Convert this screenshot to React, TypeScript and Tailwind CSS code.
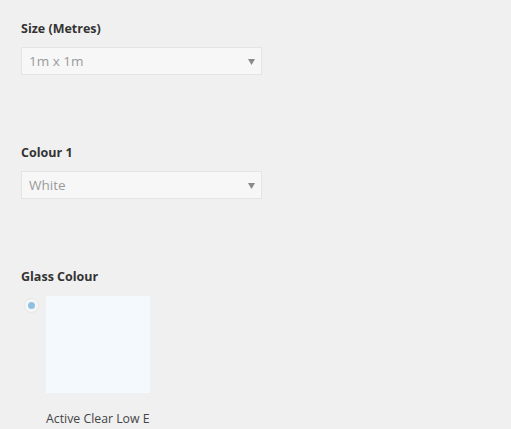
import React from "react";

function Select({ value }: { value: string }) {
  return (
    <div className="relative w-[241px] h-[28px] bg-[#f7f7f7] border border-[#e4e4e4] flex items-center pl-[7px]">
      <span className="text-[13.5px] leading-[18px] text-[#9a9a9a]">{value}</span>
      <svg className="absolute right-[6px] top-[11px]" width="7" height="6" viewBox="0 0 7 6">
        <path d="M0 0 H7 L3.5 6 Z" fill="#8a8a8a" />
      </svg>
    </div>
  );
}

export default function App() {
  return (
    <div
      className="min-h-[429px] w-full bg-[#f0f0f0] text-[#333] pl-[21px] pt-[20px]"
      style={{ fontFamily: '"Open Sans", "Noto Sans", sans-serif' }}
    >
      <div className="flex flex-col">
        <div className="text-[12.5px] leading-[18px] font-bold text-[#333]">Size (Metres)</div>
        <div className="mt-[9px]">
          <Select value="1m x 1m" />
        </div>
      </div>
      <div className="flex flex-col mt-[69px]">
        <div className="text-[12.5px] leading-[18px] font-bold text-[#333]">Colour 1</div>
        <div className="mt-[9px]">
          <Select value="White" />
        </div>
      </div>
      <div className="flex flex-col mt-[69px]">
        <div className="text-[12.5px] leading-[18px] font-bold text-[#333]">Glass Colour</div>
        <div className="flex mt-[10px]">
          <div className="mt-[2px] ml-[3px] w-[15px] h-[15px] rounded-full bg-[#f6f6f6] border border-[#e8e8e8] flex items-center justify-center">
            <div className="w-[7px] h-[7px] rounded-full bg-[#8ec1e1]" />
          </div>
          <div className="flex flex-col ml-[7px]">
            <div className="w-[104px] h-[97px] bg-[#f4f9fd]" />
            <div className="mt-[17px] text-[12.3px] leading-[18px] text-[#444]">Active Clear Low E</div>
          </div>
        </div>
      </div>
    </div>
  );
}
